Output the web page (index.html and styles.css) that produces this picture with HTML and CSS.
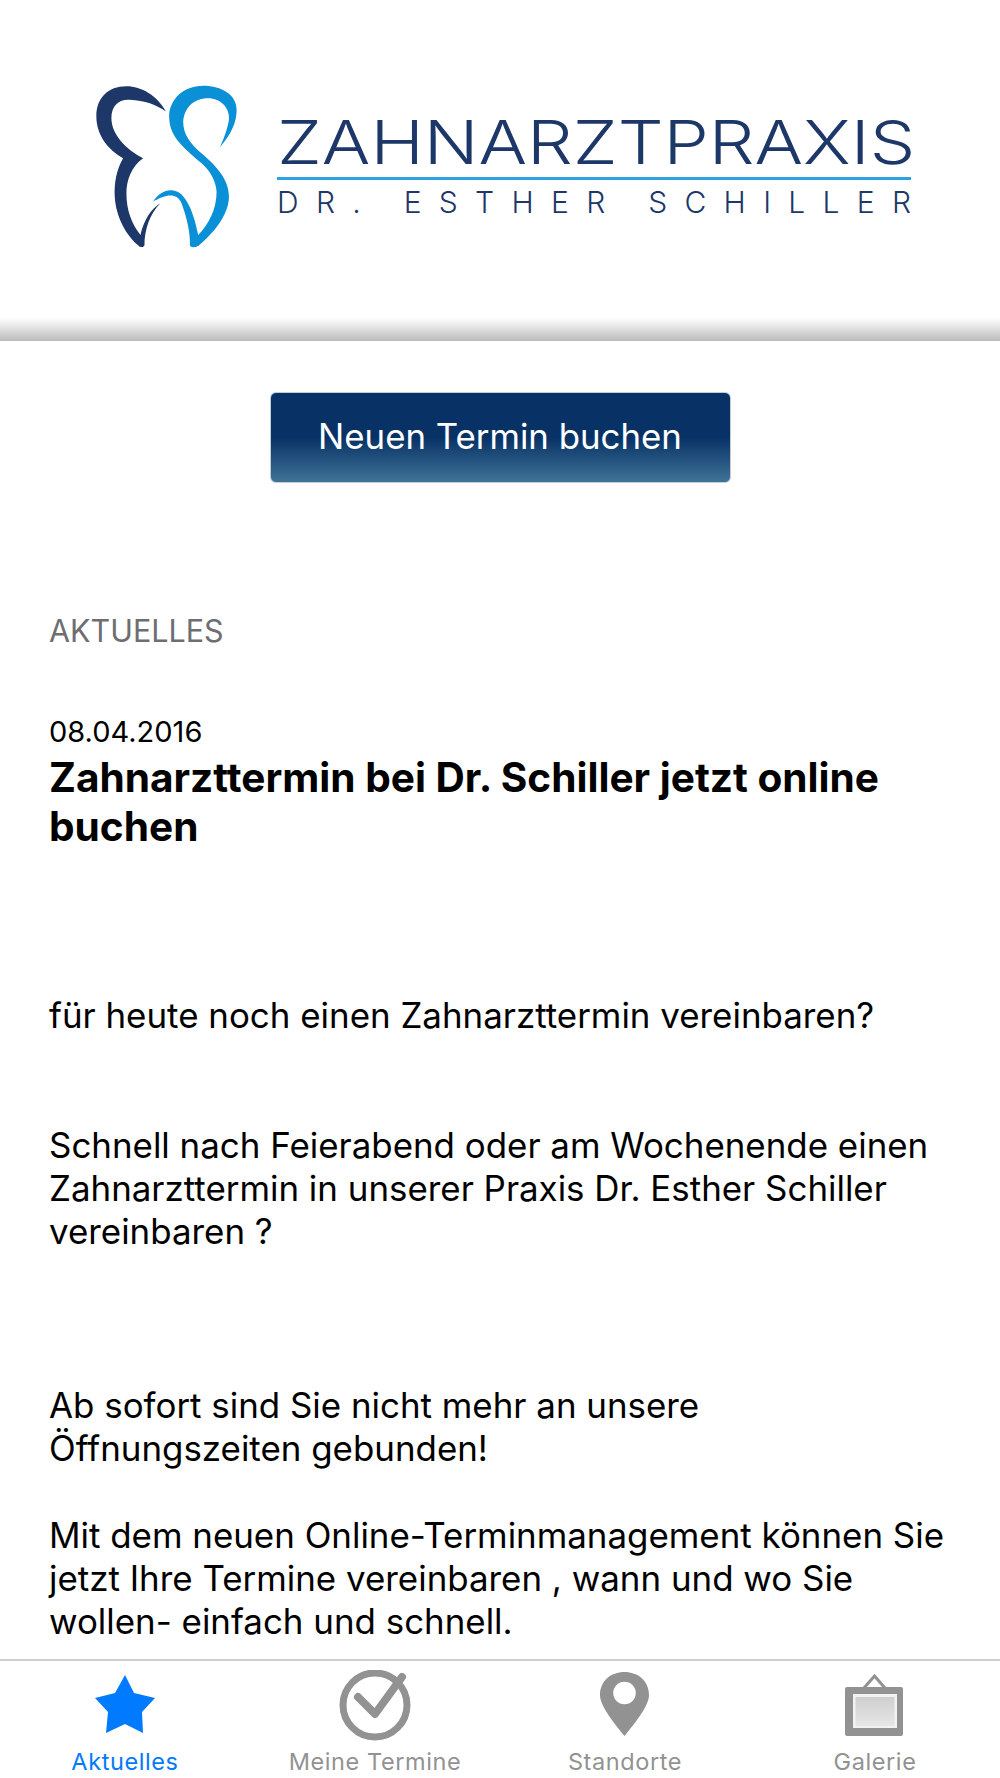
FILE: index.html
```html
<!DOCTYPE html>
<html lang="de">
<head>
<meta charset="utf-8">
<title>Zahnarztpraxis Dr. Esther Schiller</title>
<link rel="stylesheet" href="styles.css">
</head>
<body>
<header class="header">
  <div class="logo">
    <svg class="tooth" viewBox="0 0 440 500" aria-hidden="true">
      <g transform="translate(-70,-70)">
        <path class="dark" d="M288 155C262 108 215 80 170 80C115 80 80 115 80 170C80 225 115 270 160 295C140 330 133 370 135 410C138 470 170 530 210 560C216 562 222 562 224 556C224 510 240 460 272 430C245 445 222 480 212 525C185 490 170 450 170 400C170 360 185 320 220 295C170 270 125 225 125 175C125 135 150 118 180 120C225 122 260 135 288 155Z"/>
        <path class="light" d="M450 262C482 225 500 190 500 150C500 105 455 78 400 78C340 78 298 120 298 170C298 225 330 255 395 310C440 350 440 395 440 395C440 450 415 495 385 525C370 450 345 395 310 392C290 388 265 400 250 425C285 405 320 395 335 430C350 470 362 520 360 555C360 562 372 564 385 558C420 530 477 470 477 410C477 360 440 320 400 285C360 250 340 225 340 185C345 135 380 116 415 116C452 116 480 145 477 180C472 210 460 240 450 262Z"/>
      </g>
    </svg>
    <div class="wordmark">
      <div class="wordmark-title">ZAHNARZTPRAXIS</div>
      <div class="wordmark-rule"></div>
      <div class="wordmark-sub">DR. ESTHER SCHILLER</div>
    </div>
  </div>
</header>
<main class="content">
  <div class="action"><a class="button" href="#">Neuen Termin buchen</a></div>
  <h2 class="section-label">AKTUELLES</h2>
  <article class="article">
    <div class="date">08.04.2016</div>
    <h1 class="title">Zahnarzttermin bei Dr. Schiller jetzt online buchen</h1>
    <p class="para first">für heute noch einen Zahnarzttermin vereinbaren?</p>
    <p class="para gap-2">Schnell nach Feierabend oder am Wochenende einen Zahnarzttermin in unserer Praxis Dr. Esther Schiller vereinbaren ?</p>
    <p class="para gap-3">Ab sofort sind Sie nicht mehr an unsere<br>Öffnungszeiten gebunden!</p>
    <p class="para gap-1">Mit dem neuen Online-Terminmanagement können Sie jetzt Ihre Termine vereinbaren , wann und wo Sie wollen- einfach und schnell.</p>
  </article>
</main>
<nav class="tabbar">
  <a class="tab active" href="#">
    <svg class="tab-icon" viewBox="0 0 72 72" aria-hidden="true"><path class="fill" d="M36 5L45 23L66 28L53 42L54 63L36 54L17 63L19 42L6 28L26 23Z"/></svg>
    <span>Aktuelles</span>
  </a>
  <a class="tab" href="#">
    <svg class="tab-icon" viewBox="0 0 72 72" aria-hidden="true"><circle class="ring" cx="36" cy="35" r="32"/><path class="check" d="M19 27L36 44L63 7"/></svg>
    <span>Meine Termine</span>
  </a>
  <a class="tab" href="#">
    <svg class="tab-icon" viewBox="0 0 72 72" aria-hidden="true"><path class="fill" fill-rule="evenodd" d="M35.500 2C49 2 60 11 60 25C60 36 46 53 35.500 66C25 53 11 36 11 25C11 11 22 2 35.500 2ZM35.500 11.700A11.300 11.300 0 1 0 35.500 34.300A11.300 11.300 0 1 0 35.500 11.700Z"/></svg>
    <span>Standorte</span>
  </a>
  <a class="tab" href="#">
    <svg class="tab-icon" viewBox="0 0 72 72" aria-hidden="true">
      <defs><linearGradient id="pic" x1="0" y1="0" x2="0" y2="1"><stop offset="0" stop-color="#cfcfcf"/><stop offset="1" stop-color="#e6e6e6"/></linearGradient></defs>
      <path class="hook" d="M25 18L35.500 6L46 18"/>
      <rect class="fill" x="6" y="17" width="58" height="49" rx="2"/>
      <rect class="mat" x="14" y="24" width="44" height="34"/>
      <rect fill="url(#pic)" x="16.500" y="27" width="39" height="29"/>
    </svg>
    <span>Galerie</span>
  </a>
</nav>
</body>
</html>
```
FILE: styles.css
```css
html, body { margin: 0; padding: 0; }
body {
  width: 1000px;
  height: 1778px;
  display: flex;
  flex-direction: column;
  overflow: hidden;
  background: #fff;
  color: #000;
  font-family: Inter, "Liberation Sans", sans-serif;
}
.header {
  height: 341px;
  flex: none;
  box-sizing: border-box;
  padding: 83px 0 0 93px;
  background: linear-gradient(to bottom, #fff 0, #fff 318px, #bcbcbc 341px);
}
.logo { display: flex; align-items: flex-start; gap: 37px; }
.tooth { width: 147px; height: 167px; flex: none; }
.dark { fill: #1c3768; }
.light { fill: #0a90d6; }
.wordmark { width: 634px; margin-top: 36px; color: #1c3768; font-family: Inter, sans-serif; }
.wordmark-title {
  font-size: 60.500px;
  line-height: 46px;
  font-weight: 350;
  white-space: nowrap;
  transform: scaleX(1.192);
  transform-origin: left center;
}
.wordmark-rule { height: 3px; margin-top: 12px; background: #2ea2e0; }
.wordmark-sub { margin-top: 9px; font-size: 30px; line-height: 26px; font-weight: 350; letter-spacing: 17.300px; white-space: nowrap; }
.content { flex: 1; min-height: 0; overflow: hidden; padding: 0 49px; }
.action { display: flex; justify-content: center; padding-top: 51px; }
.button {
  box-sizing: border-box;
  width: 461px;
  height: 91px;
  padding-bottom: 3px;
  display: flex;
  align-items: center;
  justify-content: center;
  border: 1px solid #c3ccd6;
  border-radius: 6px;
  background: linear-gradient(to bottom, #083266 0, #083266 50%, #3f7397 100%);
  color: #fff;
  font-size: 34.800px;
  text-decoration: none;
}
.section-label { margin: 131px 0 0; font-size: 30.500px; line-height: 34px; font-weight: 400; color: #6d6d72; }
.article { margin-top: 67px; }
.date { font-size: 29px; line-height: 34px; }
.title { margin: 4px 0 0; font-size: 40.600px; line-height: 49px; font-weight: 700; }
.para { margin: 0; font-size: 34.900px; line-height: 43.300px; }
.first { margin-top: 143px; }
.gap-1 { margin-top: 43.500px; }
.gap-2 { margin-top: 86.500px; }
.gap-3 { margin-top: 130px; }
.tabbar {
  flex: none;
  height: 119px;
  box-sizing: border-box;
  display: grid;
  grid-template-columns: repeat(4, 1fr);
  border-top: 2px solid #cfcfcf;
  background: #fff;
  overflow: hidden;
}
.tab {
  display: flex;
  flex-direction: column;
  align-items: center;
  padding-top: 9px;
  color: #929292;
  font-size: 23.500px;
  line-height: 28px;
  letter-spacing: 0.600px;
  text-decoration: none;
}
.tab.active { color: #007aff; }
.tab-icon { width: 72px; height: 72px; margin-bottom: 6px; flex: none; }
.fill { fill: #929292; }
.active .fill { fill: #007aff; }
.ring { fill: none; stroke: #929292; stroke-width: 7; }
.check { fill: none; stroke: #929292; stroke-width: 8; stroke-linecap: round; stroke-linejoin: round; }
.hook { fill: none; stroke: #929292; stroke-width: 3; }
.mat { fill: #f2f2f2; }
```
